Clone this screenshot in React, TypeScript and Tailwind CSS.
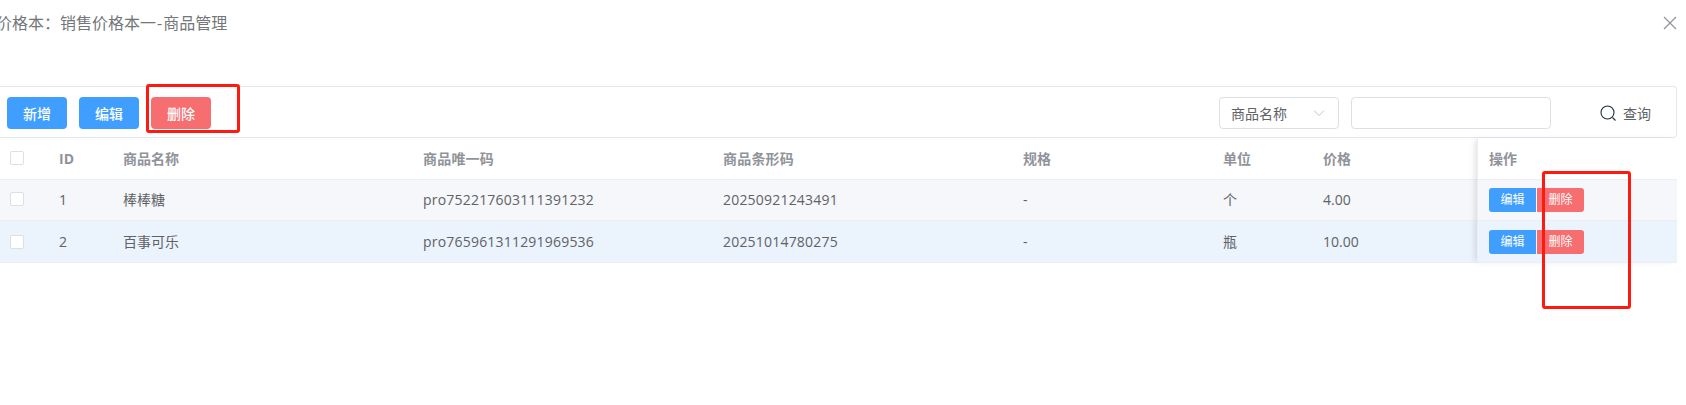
import React from "react";

const rows = [
  { id: "1", name: "棒棒糖", code: "pro752217603111391232", bar: "20250921243491", spec: "-", unit: "个", price: "4.00", bg: "bg-[#f5f7fa]", h: "h-[41px]", pb: "pb-[2px]" },
  { id: "2", name: "百事可乐", code: "pro765961311291969536", bar: "20251014780275", spec: "-", unit: "瓶", price: "10.00", bg: "bg-[#ebf3fd]", h: "h-[42px]", pb: "" },
];

function Check() {
  return <span className="block w-[14px] h-[14px] bg-white border border-[#dcdfe6] rounded-[2px]" />;
}

function Cells({ r }: { r: { id: string; name: string; code: string; bar: string; spec: string; unit: string; price: string } }) {
  return (
    <>
      <div className="w-[59px] pl-[10px] shrink-0"><Check /></div>
      <div className="w-[64px] shrink-0">{r.id}</div>
      <div className="w-[300px] shrink-0">{r.name}</div>
      <div className="w-[300px] shrink-0 tracking-[0.2px]">{r.code}</div>
      <div className="w-[300px] shrink-0 tracking-[0.2px]">{r.bar}</div>
      <div className="w-[200px] shrink-0">{r.spec}</div>
      <div className="w-[100px] shrink-0">{r.unit}</div>
      <div className="w-[100px] shrink-0">{r.price}</div>
    </>
  );
}

export default function App() {
  return (
    <div className="relative w-[1686px] h-[405px] overflow-hidden bg-white text-[14px] text-[#606266] font-['Open_Sans','Noto_Sans_CJK_SC',sans-serif]">
      <div className="flex items-center justify-between h-[46px] -ml-[4px] pr-[9px]">
        <span className="text-[16px] leading-[46px] text-[#73767a]">{"价格本\uFF1A销售价格本一"}<span className="mx-[1px]">-</span>商品管理</span>
        <svg width="14" height="14" viewBox="0 0 14 14" className="text-[#909399]">
          <path d="M1 1 L13 13 M13 1 L1 13" stroke="currentColor" strokeWidth="1.2" fill="none" />
        </svg>
      </div>

      <div className="mt-[40px] w-[1677px] h-[52px] pt-[2px] flex items-center justify-between border border-l-0 border-[#e4e7ed] rounded-r-[4px] pl-[7px]">
        <div className="flex gap-[12px] text-[14px] font-medium text-white">
          <button className="w-[60px] h-[32px] rounded-[4px] bg-[#409eff]">新增</button>
          <button className="w-[60px] h-[32px] rounded-[4px] bg-[#409eff]">编辑</button>
          <button className="w-[60px] h-[32px] rounded-[4px] bg-[#f66e70]">删除</button>
        </div>
        <div className="flex items-center">
          <div className="w-[120px] h-[32px] flex items-center justify-between pl-[11px] pr-[13px] border border-[#dcdfe6] rounded-[4px]">
            <span>商品名称</span>
            <svg width="12" height="12" viewBox="0 0 12 12" className="text-[#c0c4cc]">
              <path d="M1 3.5 L6 8.5 L11 3.5" stroke="currentColor" strokeWidth="1" fill="none" />
            </svg>
          </div>
          <div className="w-[200px] h-[32px] ml-[12px] border border-[#dcdfe6] rounded-[4px]" />
          <div className="flex items-center w-[125px] pl-[49px]">
            <svg width="17" height="17" viewBox="0 0 17 17" className="text-[#1f2d3d] shrink-0">
              <circle cx="7.5" cy="7.5" r="6.5" stroke="currentColor" strokeWidth="1.1" fill="none" />
              <path d="M12.5 12.5 L15.5 15.5" stroke="currentColor" strokeWidth="1.1" />
            </svg>
            <span className="ml-[6px]">查询</span>
          </div>
        </div>
      </div>

      <div className="relative w-[1677px]">
        <div className="flex items-center h-[42px] pb-[1px] border-b border-[#ebeef5] text-[#909399] font-bold">
          <Cells r={{ id: "ID", name: "商品名称", code: "商品唯一码", bar: "商品条形码", spec: "规格", unit: "单位", price: "价格" }} />
        </div>
        {rows.map((r) => (
          <div key={r.id} className={`flex items-center ${r.h} ${r.pb} border-b border-[#ebeef5] ${r.bg}`}>
            <Cells r={r} />
          </div>
        ))}
        <div className="absolute top-0 right-0 w-[200px] shadow-[-4px_0_6px_-2px_rgba(0,0,0,0.12)]">
          <div className="flex items-center h-[42px] pb-[1px] pl-[11px] bg-white border-b border-l border-[#ebeef5] text-[#909399] font-bold">操作</div>
          {rows.map((r) => (
            <div key={r.id} className={`flex items-center ${r.h} pl-[11px] border-b border-l border-[#ebeef5] text-[12px] text-white ${r.bg}`}>
              <button className="w-[47px] h-[24px] rounded-l-[3px] bg-[#409eff]">编辑</button>
              <button className="w-[47px] h-[24px] ml-[1px] rounded-r-[3px] bg-[#f66e70]">删除</button>
            </div>
          ))}
        </div>
      </div>

      <div className="absolute left-[146px] top-[84px] w-[94px] h-[49px] border-[3px] border-[#ff1a0f] rounded-[3px]" />
      <div className="absolute left-[1542px] top-[171px] w-[89px] h-[138px] border-[3px] border-[#ff1a0f] rounded-[3px]" />
    </div>
  );
}
